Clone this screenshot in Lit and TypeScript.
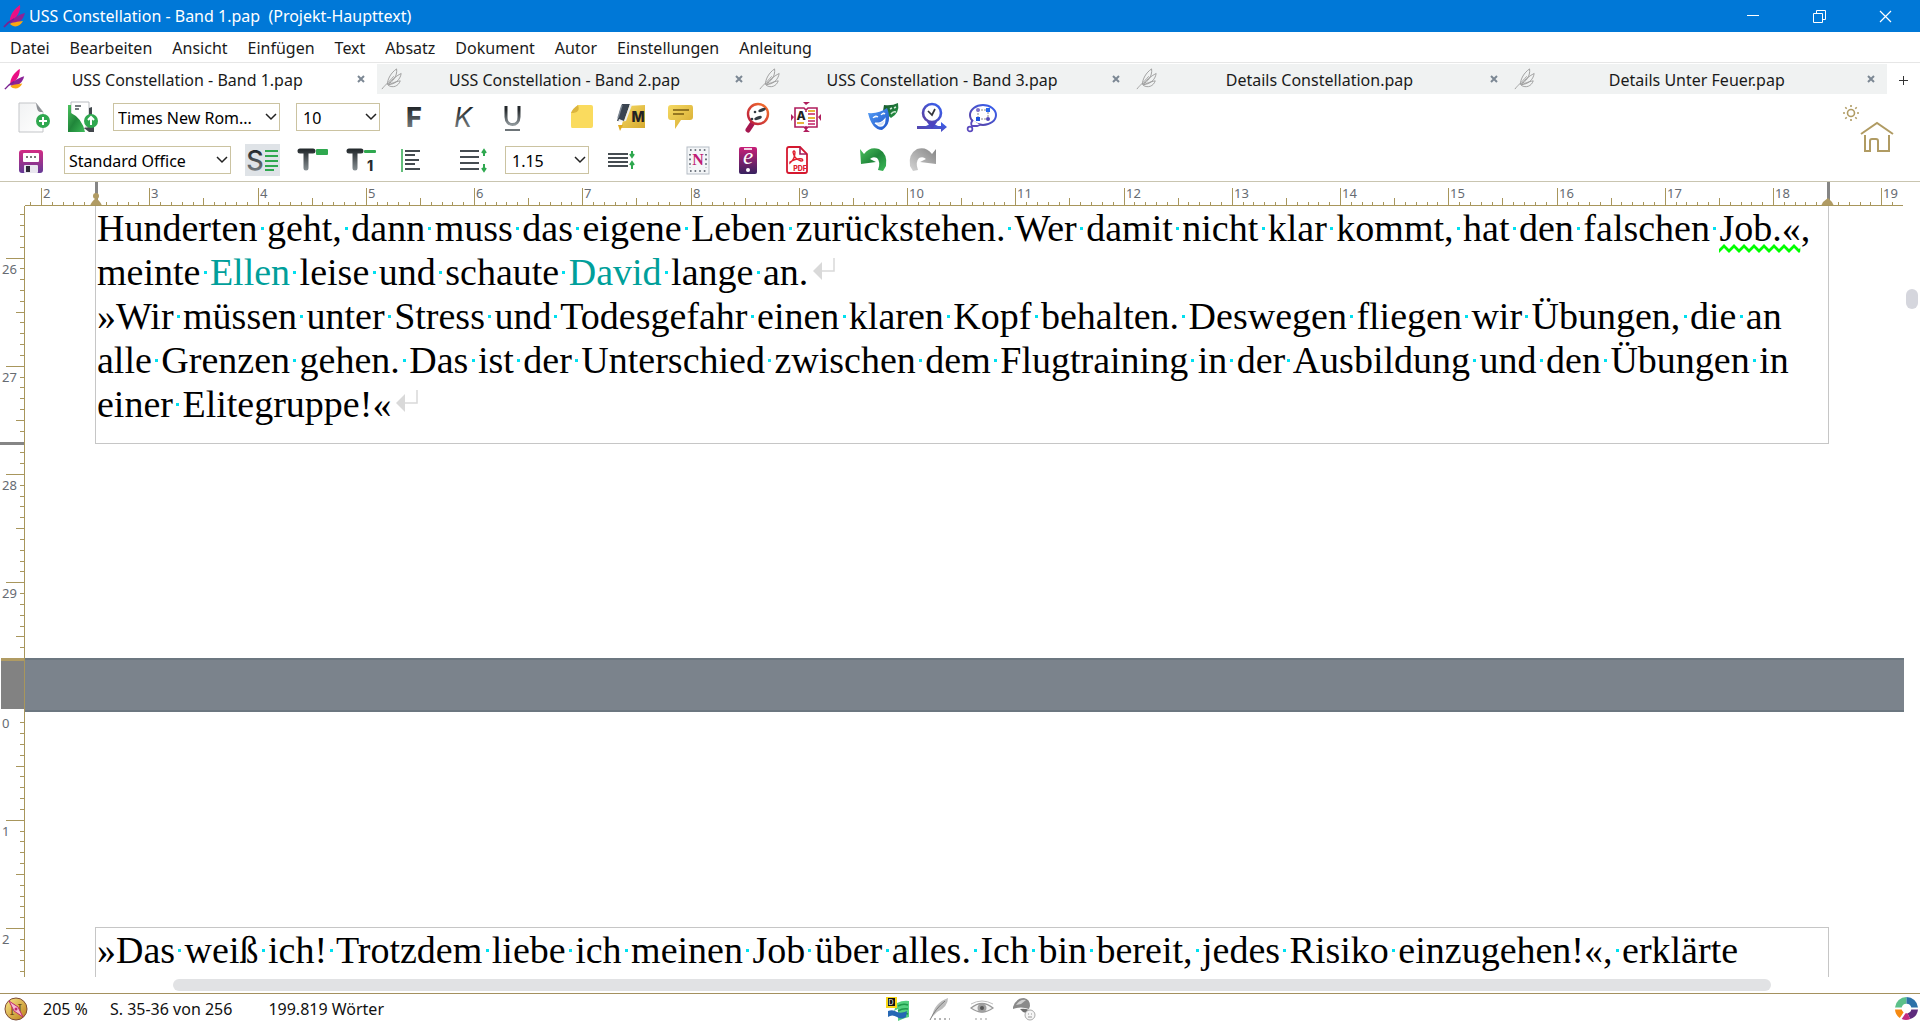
import { LitElement, html, svg, css, nothing } from "lit";
import type { TemplateResult, SVGTemplateResult } from "lit";
import { customElement, state } from "lit/decorators.js";
import { classMap } from "lit/directives/class-map.js";

const CM = 108.25;

const feather = svg`
  <path d="M17 1C11 5 6 12 7 18C12 16 16 10 17 1Z" fill="#f0127f"/>
  <path d="M7 18C8 12 12 6 17 1C18 7 14 14 7 18Z" fill="#e80f86"/>
  <path d="M22 9C15 11 9 15 7 19C14 21 20 17 22 9Z" fill="#8c2397"/>
  <path d="M20 17C15 18 9 18 7 20C11 24 17 23 20 17Z" fill="#fba713"/>
  <path d="M1 23C4 19 7 17 11 15" stroke="#7a2191" stroke-width="1.6" fill="none"/>`;

const featherOutline = svg`
  <g fill="none" stroke="#9b9b9b" stroke-width="1">
    <path d="M17 1C11 5 7 12 7 18C13 15 18 9 17 1Z"/>
    <path d="M22 6C16 9 10 14 8 18C15 18 21 13 22 6Z"/>
    <path d="M21 14C16 15 10 17 8 19C13 22 19 20 21 14Z"/>
    <path d="M1 23C4 19 7 17 14 9"/>
  </g>`;

const icons: Record<string, SVGTemplateResult> = {
  newDoc: svg`
    <path d="M1 2H18L25 11V31H1Z" fill="url(#paper)" stroke="#c3c5c8"/>
    <path d="M18 2L25 11H22C19 10 19 7 18 2Z" fill="#8d9095"/>
    <circle cx="25" cy="20" r="7" fill="#2fa84f"/>
    <path d="M25 16V24M21 20H29" stroke="#fff" stroke-width="2"/>`,
  importDoc: svg`
    <path d="M4 1H22V22L17 28L4 13Z" fill="#fff" stroke="#b9bcc0"/>
    <path d="M8 5H14M8 8H12" stroke="#4a5056" stroke-width="1.4"/>
    <path d="M22 7L25 6V16H22ZM17 27L27 25V31H22Z" fill="#41474c"/>
    <path d="M1 4H4V12Q15 17 18 31H1Z" fill="url(#green)"/>
    <circle cx="24" cy="20" r="7" fill="#2fa84f"/>
    <path d="M24 24V17M21 19L24 16L27 19" stroke="#fff" stroke-width="2" fill="none"/>`,
  save: svg`
    <rect x="4" y="6" width="24" height="23" rx="3" fill="url(#magenta)"/>
    <rect x="8" y="9" width="16" height="9" rx="1" fill="#fff"/>
    <path d="M11 13H13M15 13H17M19 13H21" stroke="#777" stroke-width="2"/>
    <rect x="9" y="21" width="14" height="8" rx="1" fill="#e9e6ef"/>
    <rect x="11" y="22" width="4" height="6" fill="#2e2a38"/>`,
  bold: svg`<text x="15" y="26" text-anchor="middle" class="glyph" font-size="27" font-weight="800" fill="url(#ink)">F</text>`,
  italic: svg`<text x="15" y="26" text-anchor="middle" class="glyph" font-size="27" font-style="italic" font-weight="400" fill="url(#ink)">K</text>`,
  underline: svg`
    <path d="M9 5V16C9 26 22 26 22 16V5" fill="none" stroke="url(#ink)" stroke-width="3"/>
    <path d="M8 29H23" stroke="#6d7478" stroke-width="2"/>`,
  note: svg`
    <path d="M12 4H25Q27 4 27 6V25Q27 27 25 27H6Q5 27 5 25V12Z" fill="#fadb5e"/>
    <path d="M12 4Q15 12 5 12Q6 8 12 4Z" fill="#dcb53d"/>`,
  marker: svg`
    <path d="M12 5L30 4V27H6Z" fill="url(#gold)"/>
    <path d="M7 3H15L9 20H2Z" fill="#3a4450"/><path d="M9 20L15 3L17 4L11 20L3 21L4 18Z" fill="#eef0f2"/>
    <path d="M7 4L3 17" stroke="#7f8994" stroke-width="1.4"/>
    <path d="M3 24H8L5 30Z" fill="#e0a91e"/>
    <text x="23" y="21" text-anchor="middle" class="glyph" font-size="14" font-weight="800" fill="#232323">M</text>`,
  comment: svg`
    <path d="M5 4H27Q29 4 29 7V16Q29 19 26 19H17L11 28V19H7Q4 19 4 16V7Q4 4 7 4Z" fill="url(#gold)"/>
    <path d="M9 9H25M9 13H20" stroke="#7a5c12" stroke-width="1.6"/>`,
  search: svg`
    <path d="M7 29L11 23" stroke="#a5174f" stroke-width="5" stroke-linecap="round"/>
    <circle cx="17" cy="13" r="10" fill="#fff" stroke="url(#fire)" stroke-width="2.4"/>
    <ellipse cx="21" cy="9" rx="4" ry="1.600" transform="rotate(-20 21 9)" fill="#333c44"/>
    <ellipse cx="17" cy="17" rx="4" ry="1.600" transform="rotate(-20 17 17)" fill="#333c44"/>
    <circle cx="14" cy="11" r="1.3" fill="#333c44"/><circle cx="11" cy="18" r="1.3" fill="#333c44"/>`,
  book: svg`
    <path d="M5 7H14L16 9L18 7H27V26H18L16 28L14 26H5ZM16 8V11M16 25V28" fill="none" stroke="#b01d5c" stroke-width="1.6"/>
    <path d="M13 1H20L16 4ZM13 31H20L16 28ZM1 13V20L4 16ZM31 13V20L28 16Z" fill="#b01d5c"/>
    <text x="11" y="19" text-anchor="middle" class="glyph" font-size="12" font-weight="800" fill="#222">A</text>
    <path d="M7 22H14M18 10H25M18 17H25" stroke="#e7b63c" stroke-width="1.8"/>
    <path d="M18 13H25M18 20H25M18 23H25" stroke="#c22163" stroke-width="1.6"/>`,
  masks: svg`
    <path d="M17 4Q25 5 31 2Q33 12 24 17L16 10Z" fill="url(#forest)"/>
    <path d="M23 8L25 7M27 7L29 6M24 13Q26 10 29 11" stroke="#cfe8d3" stroke-width="1.4" fill="none"/>
    <path d="M1 12Q12 13 20 7Q26 22 15 29Q5 29 1 12Z" fill="url(#sky)"/>
    <path d="M6 17Q8 14 11 16M14 14Q16 11 18 13M8 22Q14 23 18 18Q18 26 12 25Z" stroke="#fff" stroke-width="1.2" fill="#fff" fill-opacity=".8"/>`,
  timeline: svg`
    <path d="M1 25H10L14 23H18L22 25H25V21L31 26L25 31V28H1Z" fill="url(#violet)"/>
    <circle cx="16" cy="12" r="9" fill="#fff" stroke="url(#violet)" stroke-width="2.6"/>
    <path d="M11 21H21L16 28Z" fill="#4b43c0"/>
    <path d="M12 10L16 14L19 8" fill="none" stroke="#33343a" stroke-width="1.7"/>`,
  mindmap: svg`
    <ellipse cx="18" cy="14" rx="13" ry="10" fill="#fff" stroke="url(#violet)" stroke-width="2"/>
    <path d="M8 19Q5 22 7 25H12L15 24" fill="#fff" stroke="#5a49bd" stroke-width="1.8"/>
    <circle cx="5" cy="28" r="2.4" fill="#fff" stroke="#5a49bd" stroke-width="1.7"/>
    <path d="M13 9H23V18H13Z" fill="none" stroke="#888" stroke-dasharray="2 1"/>
    <circle cx="13" cy="9" r="2" fill="#8274c9"/><rect x="21" y="7" width="4" height="4" fill="#2767ee"/>
    <rect x="11" y="16" width="4" height="4" fill="#1a52dd"/><circle cx="23" cy="18" r="2" fill="#5347b9"/>`,
  style: svg`
    <text x="8" y="26" text-anchor="middle" class="glyph" font-size="27" font-weight="500" fill="url(#ink)">S</text>
    <path d="M18 7H31M18 12H31M18 17H31M18 22H31M18 26H27" stroke="#2fa84f" stroke-width="2"/>`,
  title: svg`
    <path d="M4 7H17M10 7V24" stroke="url(#inkU)" stroke-width="5" stroke-linecap="round"/>
    <rect x="20" y="5" width="12" height="6" rx="1" fill="#2fa84f"/>`,
  title1: svg`
    <path d="M4 7H16M10 7V24" stroke="url(#inkU)" stroke-width="5" stroke-linecap="round"/>
    <rect x="19" y="6" width="12" height="3" rx="1" fill="#2fa84f"/>
    <text x="25" y="27" text-anchor="middle" class="glyph" font-size="14" font-weight="800" fill="#262b2f">1</text>`,
  list: svg`
    <path d="M8 5V28" stroke="#2fa84f" stroke-width="1.5"/>
    <path d="M11 7H26M11 11H21M11 16H25M11 20H21M11 25H26" stroke="#444b50" stroke-width="2"/>`,
  spacing: svg`
    <path d="M4 7H23M4 13H23M4 19H23M4 25H23" stroke="#454c51" stroke-width="2.200"/>
    <path d="M28 12V7M26 9L28 6L30 9M28 20V26M26 24L28 27L30 24" stroke="#2fa84f" stroke-width="2" fill="none"/>`,
  compact: svg`
    <path d="M3 10H23M3 14H23M3 18H23M3 22H23" stroke="#454c51" stroke-width="2"/>
    <path d="M27 7V12M25 10L27 13L29 10M27 25V19M25 21L27 18L29 21" stroke="#2fa84f" stroke-width="2" fill="none"/>`,
  norm: svg`
    <rect x="5" y="3" width="22" height="27" fill="#f4f6f8" stroke="#b6bdc6"/>
    <path d="M8 6H25M8 27H25M8 10V24M24 10V24" fill="none" stroke="#49525c" stroke-width="1.6" stroke-dasharray="1.6 3"/>
    <text x="16" y="21" text-anchor="middle" font-family="Liberation Serif, serif" font-size="16" font-weight="700" fill="#c01c74">N</text>`,
  ebook: svg`
    <rect x="8" y="3" width="18" height="27" rx="2" fill="url(#berry)"/>
    <path d="M13 5H21" stroke="#fff" stroke-width="1.6"/><circle cx="17" cy="26" r="2" fill="#fff"/>
    <text x="17" y="20" text-anchor="middle" font-family="Liberation Serif, serif" font-size="23" font-style="italic" fill="#fff">e</text>`,
  pdf: svg`
    <path d="M9 3H20L27 10V27Q27 29 25 29H9Q7 29 7 27V5Q7 3 9 3Z" fill="#fff" stroke="#d5182f" stroke-width="1.8"/>
    <path d="M20 3V10H27" fill="none" stroke="#a01d5a" stroke-width="1.6"/>
    <path d="M10 19Q15 15 15 8Q14 6 13 8Q14 15 21 17Q24 17 22 15Q17 14 10 18Z" fill="none" stroke="#e0202f" stroke-width="1.4"/>
    <text x="20" y="27" text-anchor="middle" class="glyph" font-size="7" font-weight="800" fill="#e0202f">PDF</text>`,
  undo: svg`<path d="M3 5L7 10Q13 2 22 5Q31 10 29 22L26 27L21 26Q24 18 20 14Q16 12 13 15L19 18L4 20Z" fill="url(#green)"/>`,
  redo: svg`<path d="M30 5L26 10Q20 2 11 5Q2 10 4 22L7 27L12 26Q9 18 13 14Q17 12 20 15L14 18L30 20Z" fill="url(#silver)"/>`,
};

const defs = svg`
  <defs>
    <linearGradient id="ink" x1="0" y1="0" x2="0" y2="1"><stop offset=".2" stop-color="#23282b"/><stop offset="1" stop-color="#8d9599"/></linearGradient>
    <linearGradient id="inkU" gradientUnits="userSpaceOnUse" x1="0" y1="6" x2="0" y2="28"><stop offset="0" stop-color="#252b2e"/><stop offset="1" stop-color="#8f979b"/></linearGradient>
    <linearGradient id="paper" x1="0" y1="0" x2="1" y2="1"><stop offset="0" stop-color="#f1f2f3"/><stop offset="1" stop-color="#fff"/></linearGradient>
    <linearGradient id="green" x1="0" y1="0" x2="1" y2="1"><stop offset="0" stop-color="#4cc35f"/><stop offset=".5" stop-color="#20863a"/><stop offset="1" stop-color="#3dbb59"/></linearGradient>
    <linearGradient id="silver" x1="0" y1="1" x2="1" y2="0"><stop offset="0" stop-color="#d6d6d6"/><stop offset="1" stop-color="#858585"/></linearGradient>
    <linearGradient id="magenta" x1="0" y1="0" x2="0" y2="1"><stop offset="0" stop-color="#d32b84"/><stop offset="1" stop-color="#643a96"/></linearGradient>
    <linearGradient id="berry" x1="0" y1="0" x2="0" y2="1"><stop offset="0" stop-color="#c81f78"/><stop offset="1" stop-color="#37225f"/></linearGradient>
    <linearGradient id="gold" x1="0" y1="0" x2="1" y2="1"><stop offset="0" stop-color="#f5d963"/><stop offset="1" stop-color="#d6aa30"/></linearGradient>
    <linearGradient id="fire" x1="1" y1="0" x2="0" y2="1"><stop offset="0" stop-color="#f7742a"/><stop offset="1" stop-color="#b8183f"/></linearGradient>
    <linearGradient id="forest" x1="0" y1="0" x2="1" y2="1"><stop offset="0" stop-color="#17532a"/><stop offset="1" stop-color="#259a46"/></linearGradient>
    <linearGradient id="sky" x1="0" y1="0" x2="1" y2="1"><stop offset="0" stop-color="#55a0f7"/><stop offset="1" stop-color="#1e52c9"/></linearGradient>
    <linearGradient id="violet" x1="0" y1="1" x2="1" y2="0"><stop offset="0" stop-color="#5c3f9e"/><stop offset="1" stop-color="#3661f2"/></linearGradient>
    <linearGradient id="coin" x1="0" y1="0" x2="1" y2="1"><stop offset="0" stop-color="#fbe98b"/><stop offset="1" stop-color="#b97d16"/></linearGradient>
    <pattern id="zigzag" width="10" height="9" patternUnits="userSpaceOnUse"><path d="M-1 8L5 2L11 8" fill="none" stroke="#00ff00" stroke-width="2.8"/></pattern>
  </defs>`;

interface Tool { icon: string; label: string; gap?: boolean; near?: boolean; shift?: boolean; active?: boolean }

@customElement("app-root")
export class AppRoot extends LitElement {
  static styles = css`
    :host {
      display: flex;
      flex-direction: column;
      height: 100vh;
      overflow: hidden;
      background: #fff;
      color: #1a1a1a;
      font-family: "Noto Sans", "Open Sans", sans-serif;
      font-size: 16px;
      line-height: 24px;
    }
    button, select { font: inherit; color: inherit; }
    button { background: none; border: 0; padding: 0; cursor: pointer; }
    svg { display: block; flex: none; }
    .glyph { font-family: Inter, "Open Sans", sans-serif; }
    .shared { width: 0; height: 0; }

    .titlebar {
      flex: none;
      display: flex;
      align-items: center;
      height: 32px;
      padding: 0 2px 0 3px;
      background: #0078d7;
      color: #fff;
    }
    .title { flex: 1; margin: 0 0 0 2px; font-size: 16px; font-weight: 400; white-space: pre; }
    .window-button { width: 66px; height: 32px; display: grid; place-items: center; }

    .menubar { flex: none; display: flex; gap: 20px; padding: 4px 10px 2px; border-bottom: 1px solid #e6e6e6; }

    .tabs { flex: none; display: flex; height: 30px; margin-top: 1px; }
    .tab { flex: 1; display: flex; align-items: center; padding: 0 11px 0 4px; background: #f0f2f2; }
    .tab.current { background: #fff; }
    .tab-name { flex: 1; padding: 1px 8px 0 0; text-align: center; }
    .tab-close { width: 10px; height: 20px; display: grid; place-items: center; }
    .tab-add { width: 33px; padding-top: 2px; display: grid; place-items: center; }

    .toolbar { flex: none; display: flex; justify-content: space-between; padding: 9px 24px 7px 6px; border-bottom: 1px solid #c9c5b0; }
    .rows { display: flex; flex-direction: column; gap: 15px; }
    .row { display: flex; align-items: center; height: 28px; }
    .row.first { padding-left: 3px; }
    .tool { width: 49px; height: 32px; display: grid; place-items: center; }
    .tool svg { overflow: visible; }
    .tool.gap { margin-left: 28px; }
    .tool.near { margin-left: 20px; }
    .tool.shift { width: 62px; padding-left: 13px; }
    .tool.active { background: linear-gradient(#dfe3e7, #dfe3e7) center / 35px 32px no-repeat; }
    .pick { position: relative; display: flex; }
    .pick.face { margin: 0 8px 0 6px; }
    .pick.small { margin: 0 10px 0 8px; }
    .pick.lead, .pick.spaced { margin: 0 7px 0 9px; }
    .pick select {
      appearance: none;
      width: 167px;
      height: 28px;
      padding: 2px 16px 0 4px;
      border: 1px solid #cbc3a1;
      border-radius: 0;
      background: #fff;
      color: #000;
    }
    .pick.small select, .pick.spaced select { width: 84px; padding-left: 6px; }
    .pick svg { position: absolute; right: 3px; top: 9px; pointer-events: none; }
    .corner { display: flex; }
    .sun { align-self: flex-start; padding-top: 1px; }
    .home { align-self: flex-start; padding-top: 17px; }

    .ruler { flex: none; display: block; width: calc(100% - 17px); height: 24px; overflow: hidden; }
    .ruler-text { font-size: 13px; fill: #666b72; }
    .work { flex: 1; min-height: 0; display: flex; }
    .side { flex: none; width: 25px; overflow: hidden; }
    .main { flex: 1; min-width: 0; overflow: hidden; }
    .frame {
      margin: 0 75px 0 70px;
      border: 1px solid #c6c6c6;
      font-family: "Liberation Serif", "Times New Roman", serif;
      font-size: 38px;
      line-height: 44px;
      color: #000;
    }
    .frame.upper { border-top: 0; padding-bottom: 17px; }
    .frame.lower { margin-top: 215px; border-bottom: 0; padding-bottom: 20px; }
    .line { margin: 0; padding-left: 1px; white-space: pre; }
    .gap-dot { background: linear-gradient(#00e0f0, #00e0f0) center / 3px 3px no-repeat; }
    .person { color: #009f9b; }
    .flagged { position: relative; }
    .flagged svg { position: absolute; left: 0; bottom: -4px; width: 100%; height: 9px; }
    .return { display: inline-block; margin-left: 4px; vertical-align: 4px; }
    .page-gap { height: 50px; margin-top: 214px; border: solid #6c7780; border-width: 2px 0; background: #7b838c; }
    .track { flex: none; width: 16px; }
    .track-thumb { width: 12px; height: 20px; margin: 83px 0 0 2px; border-radius: 6px; background: #d5d6dd; }

    .bottom-scroll { flex: none; padding: 2px 149px 2px 173px; }
    .bottom-thumb { height: 12px; border-radius: 6px; background: #e1e2e4; }

    .status {
      flex: none;
      display: grid;
      grid-template-columns: 1fr auto 1fr;
      align-items: center;
      height: 29px;
      padding: 0 2px 0 4px;
      border-top: 1px solid #a4915f;
      color: #111;
    }
    .facts { display: flex; align-items: center; }
    .facts .zoom { margin-left: 15px; }
    .facts .pages { margin-left: 22px; }
    .facts .words { margin-left: 36px; }
    .modes { display: flex; gap: 18px; }
    .wheel { justify-self: end; }
  `;

  @state() private current = 0;

  private tabs = ["USS Constellation - Band 1.pap", "USS Constellation - Band 2.pap", "USS Constellation - Band 3.pap", "Details Constellation.pap", "Details Unter Feuer.pap"];
  private menus = ["Datei", "Bearbeiten", "Ansicht", "Einfügen", "Text", "Absatz", "Dokument", "Autor", "Einstellungen", "Anleitung"];

  private icon(shape: SVGTemplateResult, size = 32, box = 32): TemplateResult {
    return html`<svg width=${size} height=${size} viewBox="0 0 ${box} ${box}" aria-hidden="true">${shape}</svg>`;
  }

  private tool(t: Tool): TemplateResult {
    return html`<button class=${classMap({ tool: true, gap: !!t.gap, near: !!t.near, shift: !!t.shift, active: !!t.active })} aria-label=${t.label}>${this.icon(icons[t.icon])}</button>`;
  }

  private pick(kind: string, label: string, values: string[]): TemplateResult {
    return html`<div class="pick ${kind}">
      <select aria-label=${label}>${values.map((v) => html`<option>${v}</option>`)}</select>
      <svg width="12" height="10" viewBox="0 0 12 10"><path d="M1 2L6 7L11 2" fill="none" stroke="#222" stroke-width="1.5"/></svg>
    </div>`;
  }

  private text(line: string): (string | TemplateResult)[] {
    return line.split(" ").flatMap((word, i) => {
      let part: string | TemplateResult = word;
      if (word === "Ellen" || word === "David") part = html`<span class="person">${word}</span>`;
      if (word === "Job.«,") part = html`<span class="flagged">Job.«<svg><rect width="100%" height="9" fill="url(#zigzag)"/></svg></span>,`;
      return i ? [html`<span class="gap-dot"> </span>`, part] : [part];
    });
  }

  private line(line: string, ends = false): TemplateResult {
    const mark = html`<svg class="return" width="24" height="24" viewBox="0 0 24 24"><path d="M1 14L10 5V23Z" fill="#d9d9d9"/><path d="M9 14H22V1" fill="none" stroke="#d9d9d9" stroke-width="1.500"/></svg>`;
    return html`<p class="line">${this.text(line)}${ends ? mark : nothing}</p>`;
  }

  private topRuler(): TemplateResult {
    const ticks: SVGTemplateResult[] = [];
    for (let i = 19; i <= 192; i++) {
      const x = Math.round(41 + ((i - 20) * CM) / 10);
      const top = i % 10 === 0 ? 6 : i % 5 === 0 ? 16 : 20;
      if (x > 1903) break;
      ticks.push(svg`<rect x=${x} y=${top} width="1" height=${24 - top} fill="#a8965c"/>`);
      if (i % 10 === 0) ticks.push(svg`<text class="ruler-text" x=${x + 2} y="16">${i / 10}</text>`);
    }
    return html`<svg class="ruler" role="img" aria-label="Horizontales Lineal">
      ${ticks}
      <rect x="95" width="3" height="24" fill="#858585"/>
      <circle cx="96" cy="14" r="3" fill="#b09b63"/>
      <path d="M90 24Q91 20 96 16Q101 20 102 24Z" fill="#b09b63"/>
      <rect x="1827" width="3" height="24" fill="#858585"/>
      <path d="M1821 24L1823 20L1828 16L1832 20L1834 24Z" fill="#b09b63"/>
      <rect x="25" y="23" width="100%" height="1" fill="#a8965c"/>
    </svg>`;
  }

  private sideRuler(): TemplateResult {
    const ticks: SVGTemplateResult[] = [];
    const scale = (zero: number, from: number, to: number) => {
      for (let i = from; i <= to; i++) {
        const y = Math.floor(zero + (i * CM) / 10);
        const left = i % 10 === 0 ? 6 : i % 5 === 0 ? 16 : 20;
        if (i !== 0) ticks.push(svg`<rect x=${left} y=${y} width=${24 - left} height="1" fill="#a8965c"/>`);
        if (i % 10 === 0) ticks.push(svg`<text class="ruler-text" x="2" y=${y + 16}>${i / 10}</text>`);
      }
    };
    scale(52 - 26 * CM, 256, 296);
    scale(506, 0, 24);
    return html`<svg class="side" height="100%" role="img" aria-label="Vertikales Lineal">
      ${ticks}
      <rect y="236" width="24" height="3" fill="#858585"/>
      <rect x="1" y="452" width="23" height="51" fill="#828282"/>
      <rect x="1" y="452" width="23" height="3" fill="#b09b63"/>
      <rect x="24" width="1" height="100%" fill="#a8965c"/>
    </svg>`;
  }

  render() {
    return html`
      <svg class="shared" aria-hidden="true">${defs}</svg>
      <header class="titlebar">
        ${this.icon(feather, 24, 24)}
        <h1 class="title">USS Constellation - Band 1.pap  (Projekt-Haupttext)</h1>
        <button class="window-button" aria-label="Minimieren"><svg width="12" height="12"><rect y="5" width="12" height="1" fill="#fff"/></svg></button>
        <button class="window-button" aria-label="Wiederherstellen"><svg width="13" height="13" fill="none" stroke="#fff"><path d="M.5 3.500H9.500V12.500H.5ZM3.500 3V.5H12.500V9.500H10"/></svg></button>
        <button class="window-button" aria-label="Schließen"><svg width="13" height="13"><path d="M1 1L12 12M12 1L1 12" stroke="#fff" stroke-width="1.200"/></svg></button>
      </header>
      <nav class="menubar">${this.menus.map((m) => html`<button>${m}</button>`)}</nav>
      <div class="tabs">
        ${this.tabs.map((name, i) => html`
          <div class=${classMap({ tab: true, current: i === this.current })}>
            ${this.icon(i === this.current ? feather : featherOutline, 22, 24)}
            <button class="tab-name" @click=${() => (this.current = i)}>${name}</button>
            <button class="tab-close" aria-label="${name} schließen"><svg width="8" height="8"><path d="M1 1L7 7M7 1L1 7" stroke="#7c8894" stroke-width="2"/></svg></button>
          </div>`)}
        <button class="tab-add" aria-label="Neuer Tab"><svg width="9" height="9"><path d="M4.500 0V9M0 4.500H9" stroke="#333"/></svg></button>
      </div>
      <div class="toolbar">
        <div class="rows">
          <div class="row first">
            ${this.tool({ icon: "newDoc", label: "Neu" })}
            ${this.tool({ icon: "importDoc", label: "Öffnen" })}
            ${this.pick("face", "Schriftart", ["Times New Rom..."])}
            ${this.pick("small", "Schriftgröße", ["10", "12"])}
            ${this.tool({ icon: "bold", label: "Fett" })}
            ${this.tool({ icon: "italic", label: "Kursiv" })}
            ${this.tool({ icon: "underline", label: "Unterstrichen" })}
            ${this.tool({ icon: "note", label: "Notiz", near: true })}
            ${this.tool({ icon: "marker", label: "Markieren" })}
            ${this.tool({ icon: "comment", label: "Kommentar" })}
            ${this.tool({ icon: "search", label: "Prüfen", gap: true })}
            ${this.tool({ icon: "book", label: "Seitenansicht" })}
            ${this.tool({ icon: "masks", label: "Figuren", gap: true })}
            ${this.tool({ icon: "timeline", label: "Zeitstrahl" })}
            ${this.tool({ icon: "mindmap", label: "Ideen" })}
          </div>
          <div class="row">
            ${this.tool({ icon: "save", label: "Speichern" })}
            ${this.pick("lead", "Formatvorlage", ["Standard Office"])}
            ${this.tool({ icon: "style", label: "Stile", active: true })}
            ${this.tool({ icon: "title", label: "Überschrift" })}
            ${this.tool({ icon: "title1", label: "Überschrift 1" })}
            ${this.tool({ icon: "list", label: "Linksbündig" })}
            ${this.tool({ icon: "spacing", label: "Absatzabstand", shift: true })}
            ${this.pick("spaced", "Zeilenabstand", ["1.15", "1.5"])}
            ${this.tool({ icon: "compact", label: "Abstand verringern" })}
            ${this.tool({ icon: "norm", label: "Normseite", gap: true })}
            ${this.tool({ icon: "ebook", label: "E-Book" })}
            ${this.tool({ icon: "pdf", label: "PDF" })}
            ${this.tool({ icon: "undo", label: "Rückgängig", gap: true })}
            ${this.tool({ icon: "redo", label: "Wiederholen" })}
          </div>
        </div>
        <div class="corner">
          <button class="sun" aria-label="Helligkeit"><svg width="18" height="18" viewBox="0 0 18 18"><g fill="none" stroke="#b09b63" stroke-width="1.600"><circle cx="9" cy="9" r="3.500"/><path d="M9 1V3M9 15V17M1 9H3M15 9H17M3.300 3.300L4.700 4.700M13.300 13.300L14.700 14.700M14.700 3.300L13.300 4.700M4.700 13.300L3.300 14.700"/></g></svg></button>
          <button class="home" aria-label="Startseite"><svg width="36" height="34" viewBox="0 0 36 34"><g fill="none" stroke="#b09b63" stroke-width="2"><path d="M1 14L17 3L33 14M5 15V31H10V21Q10 19 12 19H16Q18 19 18 21V31H29V15"/></g></svg></button>
        </div>
      </div>
      ${this.topRuler()}
      <main class="work">
        ${this.sideRuler()}
        <div class="main">
          <section class="frame upper">
            ${this.line("Hunderten geht, dann muss das eigene Leben zurückstehen. Wer damit nicht klar kommt, hat den falschen Job.«,")}
            ${this.line("meinte Ellen leise und schaute David lange an.", true)}
            ${this.line("»Wir müssen unter Stress und Todesgefahr einen klaren Kopf behalten. Deswegen fliegen wir Übungen, die an")}
            ${this.line("alle Grenzen gehen. Das ist der Unterschied zwischen dem Flugtraining in der Ausbildung und den Übungen in")}
            ${this.line("einer Elitegruppe!«", true)}
          </section>
          <div class="page-gap"></div>
          <section class="frame lower">
            ${this.line("»Das weiß ich! Trotzdem liebe ich meinen Job über alles. Ich bin bereit, jedes Risiko einzugehen!«, erklärte")}
          </section>
        </div>
        <div class="track"><div class="track-thumb"></div></div>
      </main>
      <div class="bottom-scroll"><div class="bottom-thumb"></div></div>
      <footer class="status">
        <div class="facts">
          <svg width="24" height="24" viewBox="0 0 24 24"><circle cx="12" cy="12" r="11" fill="url(#coin)" stroke="#7b4a35"/><text x="12" y="18" text-anchor="middle" font-family="Liberation Serif, serif" font-size="17" font-weight="700" fill="#6b4510">N</text><path d="M5 4L14 10L19 20L10 14Z" fill="#f6bcd0" stroke="#c2296c"/><circle cx="12" cy="12" r="1.500" fill="#c2296c"/></svg>
          <span class="zoom">205 %</span><span class="pages">S. 35-36 von 256</span><span class="words">199.819 Wörter</span>
        </div>
        <div class="modes">
          <button aria-label="Wörterbuch"><svg width="24" height="24" viewBox="0 0 24 24"><path d="M11 6Q17 3 23 4V20Q18 21 12 24V12L8 14Z" fill="#55d180"/><path d="M12 9Q17 6 22 8M12 14Q17 11 22 12M12 18Q17 15 22 17" stroke="#1f9a4a" stroke-width="1.500" fill="none"/><path d="M2 14Q7 12 11 15Q16 17 21 14L20 20Q15 23 11 20Q6 17 2 20Z" fill="#2567b4"/><rect width="11" height="11" fill="#f7d516"/><rect x="2" y="1" width="7" height="8" fill="#111"/><text x="5" y="8" text-anchor="middle" class="glyph" font-size="7" fill="#fff">D</text></svg></button>
          <button aria-label="Schreibmodus"><svg width="24" height="24" viewBox="0 0 24 24"><path d="M4 20Q6 6 20 1Q20 10 9 15Z" fill="#bdbdbd"/><path d="M2 23Q7 12 17 4" stroke="#7d7d7d" fill="none"/><path d="M6 22H22" stroke="#b5b5b5" stroke-width="2" stroke-dasharray="2 3"/></svg></button>
          <button aria-label="Lesemodus"><svg width="24" height="24" viewBox="0 0 24 24"><path d="M1 11Q12 2 23 11Q12 19 1 11Z" fill="#f3f3f3" stroke="#9a9a9a" stroke-width="1.300"/><circle cx="12" cy="11" r="4.500" fill="#9f9f9f"/><circle cx="12" cy="11" r="2" fill="#555"/><path d="M1 7Q12 1 23 7" fill="none" stroke="#c0c0c0"/><path d="M5 22H20" stroke="#cdcdcd" stroke-width="2" stroke-dasharray="2 3"/></svg></button>
          <button aria-label="Konzentration"><svg width="24" height="24" viewBox="0 0 24 24"><path d="M1 10Q4 1 12 1Q18 2 18 9L17 12Q9 9 1 12Z" fill="#8a8a8a"/><path d="M4 8Q8 2 14 3L9 7Z" fill="#d0d0d0"/><path d="M8 12Q13 11 17 13L14 16Q10 15 8 12Z" fill="#6e6e6e"/><circle cx="18" cy="18" r="5" fill="#f5f5f5" stroke="#aaa"/><path d="M16 17H17M19 17H20M16 20H20" stroke="#999"/></svg></button>
        </div>
        <button class="wheel" aria-label="Assistent"><svg width="23" height="23" viewBox="0 0 24 24"><path d="M0 11A12 12 0 0 1 12 0V7A5 5 0 0 0 7 11Z" fill="#5cc08a"/><path d="M12 0A12 12 0 0 1 24 11H17A5 5 0 0 0 12 7Z" fill="#2d72a8"/><path d="M24 13A12 12 0 0 1 16 23L13 17A5 5 0 0 0 17 13Z" fill="#5d2b7c"/><path d="M16 23A12 12 0 0 1 7 23L11 17H13Z" fill="#c22b7f"/><path d="M0 13H7A5 5 0 0 0 9 16L5 22A12 12 0 0 1 0 13Z" fill="#f58a12"/></svg></button>
      </footer>
    `;
  }
}
